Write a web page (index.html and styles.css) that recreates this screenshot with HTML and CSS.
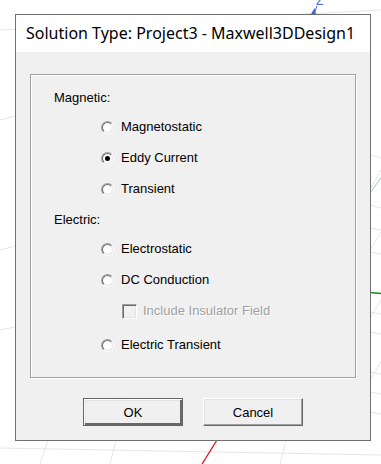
FILE: index.html
```html
<!DOCTYPE html>
<html lang="en">
<head>
    <meta charset="UTF-8">
    <meta name="viewport" content="width=device-width, initial-scale=1.0">
    <title>Solution Type</title>
    <link rel="stylesheet" href="styles.css">
</head>
<body>
    <!-- 3D modeler viewport behind the dialog -->
    <svg class="viewport" width="381" height="464" viewBox="0 0 381 464">
        <g stroke="#e4e4ee" stroke-width="1" fill="none">
            <line x1="0" y1="30" x2="381" y2="10"/>
            <line x1="0" y1="120" x2="15" y2="116"/>
            <line x1="0" y1="250" x2="15" y2="246"/>
            <line x1="0" y1="330" x2="15" y2="327"/>
            <line x1="370" y1="155" x2="381" y2="158"/>
            <line x1="370" y1="205" x2="381" y2="208"/>
            <line x1="370" y1="228" x2="381" y2="230"/>
            <line x1="370" y1="252" x2="381" y2="254"/>
            <line x1="370" y1="312" x2="381" y2="314"/>
            <line x1="370" y1="332" x2="381" y2="334"/>
            <line x1="370" y1="372" x2="381" y2="374"/>
            <line x1="370" y1="392" x2="381" y2="394"/>
            <line x1="370" y1="412" x2="381" y2="414"/>
            <line x1="0" y1="448" x2="381" y2="455"/>
            <line x1="40" y1="464" x2="48" y2="440"/>
            <line x1="110" y1="464" x2="116" y2="440"/>
            <line x1="280" y1="464" x2="286" y2="440"/>
            <line x1="370" y1="190" x2="381" y2="170"/>
            <line x1="370" y1="250" x2="381" y2="232"/>
            <line x1="370" y1="318" x2="381" y2="300"/>
            <line x1="370" y1="380" x2="381" y2="362"/>
        </g>
        <line x1="370" y1="193" x2="381" y2="178" stroke="#9fcf9f" stroke-width="1"/>
        <line x1="370" y1="292.5" x2="381" y2="293.5" stroke="#1a8a1a" stroke-width="1.5"/>
        <line x1="217" y1="440" x2="202" y2="464" stroke="#e01010" stroke-width="1.3"/>
        <line x1="314" y1="14" x2="317" y2="6" stroke="#4466dd" stroke-width="1"/>
        <path d="M311 14 L314.5 8 L316 14 Z" fill="#4466dd"/>
        <text x="316" y="5" class="axis-label">Z</text>
    </svg>

    <div class="dialog">
        <div class="dialog-title">Solution Type: Project3 - Maxwell3DDesign1</div>
        <div class="dialog-body">
            <div class="group-box">
                <div class="group-label">Magnetic:</div>
                <div class="option option-first"><span class="radio"></span>Magnetostatic</div>
                <div class="option"><span class="radio checked"></span>Eddy Current</div>
                <div class="option"><span class="radio"></span>Transient</div>
                <div class="group-label">Electric:</div>
                <div class="option option-first"><span class="radio"></span>Electrostatic</div>
                <div class="option"><span class="radio"></span>DC Conduction</div>
                <div class="option sub-option disabled"><span class="checkbox"></span>Include Insulator Field</div>
                <div class="option option-last"><span class="radio"></span>Electric Transient</div>
            </div>
            <div class="button-row">
                <button class="win-button default-button">OK</button>
                <button class="win-button">Cancel</button>
            </div>
        </div>
    </div>
</body>
</html>
```

FILE: styles.css
```css
html, body {
    margin: 0;
    padding: 0;
}

body {
    width: 381px;
    height: 464px;
    overflow: hidden;
    background-color: #ffffff;
    font-family: 'Liberation Sans', Arial, sans-serif;
    font-size: 13px;
    color: #000000;
}

.viewport {
    position: absolute;
    top: 0;
    left: 0;
    z-index: -1;
}

.axis-label {
    font-family: 'Liberation Sans', Arial, sans-serif;
    font-size: 12px;
    fill: #4466dd;
}

.dialog {
    width: 356px;
    height: 427px;
    margin: 14px 0 0 15px;
    border: 1px solid #707070;
    box-sizing: border-box;
    background-color: #f0f0f0;
    display: flex;
    flex-direction: column;
}

.dialog-title {
    height: 37px;
    background-color: #ffffff;
    font-family: 'Noto Sans', 'Open Sans', sans-serif;
    font-size: 16px;
    line-height: 37px;
    padding-left: 10px;
    color: #000000;
    white-space: nowrap;
}

.dialog-body {
    flex: 1;
    padding: 22px 14px 0 14px;
    display: flex;
    flex-direction: column;
}

.group-box {
    height: 304px;
    border: 1px solid #a0a0a0;
    box-shadow: inset 1px 1px 0 #ffffff, 1px 1px 0 #ffffff;
    box-sizing: border-box;
    padding: 15px 0 0 23px;
    display: flex;
    flex-direction: column;
    gap: 15px;
}

.group-label {
    height: 16px;
    line-height: 16px;
}

.option {
    height: 16px;
    line-height: 16px;
    margin-left: 47px;
    display: flex;
    align-items: center;
    gap: 7px;
}

.option-first {
    margin-top: -2px;
}

.option-last {
    margin-top: 3px;
}

.sub-option {
    margin-left: 68px;
    gap: 6px;
}

.disabled {
    color: #a0a0a0;
    text-shadow: 1px 1px 0 #ffffff;
}

.radio {
    width: 13px;
    height: 13px;
    box-sizing: border-box;
    border-radius: 50%;
    border: 1px solid;
    border-color: #a0a0a0 #ffffff #ffffff #a0a0a0;
    background-color: #ffffff;
    position: relative;
    flex: none;
}

.radio::before {
    content: '';
    position: absolute;
    top: 0;
    left: 0;
    right: 0;
    bottom: 0;
    border-radius: 50%;
    border: 1px solid;
    border-color: #696969 #e3e3e3 #e3e3e3 #696969;
}

.radio.checked::after {
    content: '';
    position: absolute;
    top: 3px;
    left: 3px;
    width: 5px;
    height: 5px;
    border-radius: 50%;
    background-color: #000000;
}

.checkbox {
    width: 15px;
    height: 15px;
    box-sizing: border-box;
    border: 1px solid;
    border-color: #a0a0a0 #ffffff #ffffff #a0a0a0;
    box-shadow: inset 1px 1px 0 #696969, inset -1px -1px 0 #e3e3e3;
    background-color: #f0f0f0;
    flex: none;
}

.button-row {
    display: flex;
    justify-content: center;
    gap: 20px;
    margin-top: 20px;
}

.win-button {
    width: 100px;
    height: 28px;
    box-sizing: border-box;
    padding: 0;
    font-family: 'Liberation Sans', Arial, sans-serif;
    font-size: 13px;
    color: #000000;
    background-color: #f0f0f0;
    border: 1px solid;
    border-color: #ffffff #696969 #696969 #ffffff;
    box-shadow: inset -1px -1px 0 #a0a0a0, inset 1px 1px 0 #e3e3e3;
}

.default-button {
    border-color: #646464;
    box-shadow: inset 1px 1px 0 #ffffff, inset -2px -2px 0 #696969, inset 2px 2px 0 #e3e3e3;
}
```
